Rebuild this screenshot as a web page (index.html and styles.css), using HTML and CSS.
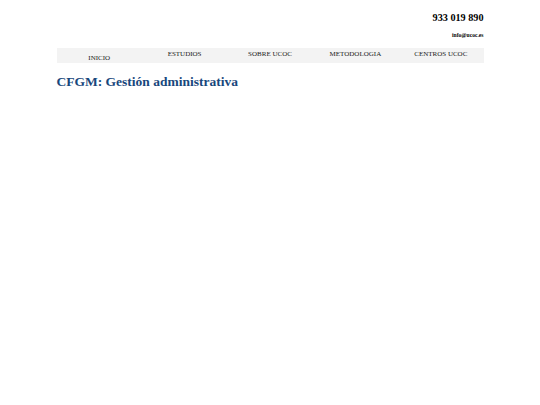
FILE: index.html
```html
<!DOCTYPE html>
<html>
<head>
<meta charset="utf-8">
<link rel="stylesheet" href="styles.css">
</head>
<body>
<div class="page">
  <header class="top">
    <div class="phone">933 019 890</div>
    <div class="email">info@ucoc.es</div>
  </header>
  <nav class="nav">
    <a class="item first">INICIO</a>
    <a class="item">ESTUDIOS</a>
    <a class="item">SOBRE UCOC</a>
    <a class="item">METODOLOGIA</a>
    <a class="item">CENTROS UCOC</a>
  </nav>
  <h1 class="title">CFGM: Gestión administrativa</h1>
</div>
</body>
</html>
```
FILE: styles.css
```css
html, body { margin: 0; padding: 0; background: #fff; }
body { font-family: "Liberation Serif", "Times New Roman", serif; color: #000; }
.page { width: 427px; margin: 0 auto; padding-top: 11px; }
.top { display: flex; flex-direction: column; align-items: flex-end; }
.phone { font-weight: bold; font-size: 10.2px; line-height: 13px; }
.email { font-weight: bold; font-size: 5.6px; line-height: 7px; margin-top: 8px; }
.nav { display: grid; grid-template-columns: repeat(5, 1fr); background: #f3f3f3; height: 15px; margin-top: 9px; }
.item { font-size: 7px; line-height: 9px; text-align: center; color: #222; padding-top: 2px; }
.item.first { padding-top: 6px; }
.title { font-size: 13.5px; line-height: 17px; color: #18477c; margin: 10px 0 0; font-weight: bold; }
```
